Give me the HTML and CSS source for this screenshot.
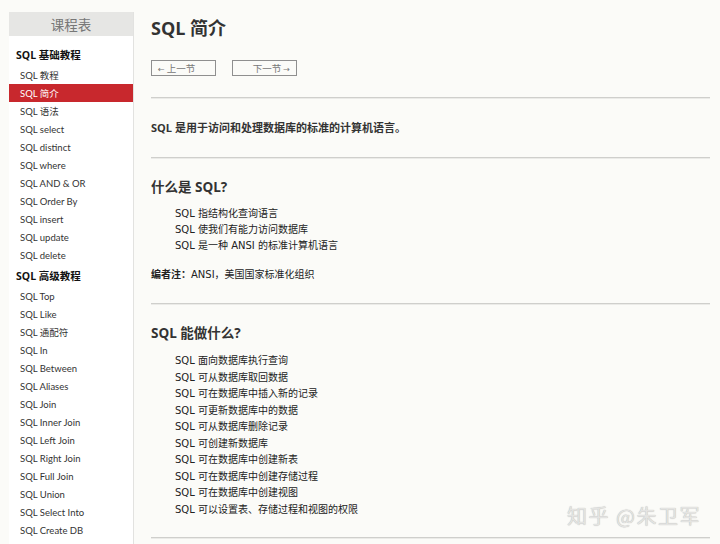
FILE: index.html
```html
<!DOCTYPE html>
<html lang="zh-CN">
<head>
<meta charset="utf-8">
<title>SQL 简介</title>
<link rel="stylesheet" href="styles.css">
</head>
<body>
<div class="page">
  <aside class="sidebar">
    <div class="side-head">课程表</div>
    <div class="side-body">
      <div class="cat">SQL 基础教程</div>
      <div class="item">SQL 教程</div>
      <div class="item active">SQL 简介</div>
      <div class="item">SQL 语法</div>
      <div class="item">SQL select</div>
      <div class="item">SQL distinct</div>
      <div class="item">SQL where</div>
      <div class="item">SQL AND &amp; OR</div>
      <div class="item">SQL Order By</div>
      <div class="item">SQL insert</div>
      <div class="item">SQL update</div>
      <div class="item">SQL delete</div>
      <div class="cat">SQL 高级教程</div>
      <div class="item">SQL Top</div>
      <div class="item">SQL Like</div>
      <div class="item">SQL 通配符</div>
      <div class="item">SQL In</div>
      <div class="item">SQL Between</div>
      <div class="item">SQL Aliases</div>
      <div class="item">SQL Join</div>
      <div class="item">SQL Inner Join</div>
      <div class="item">SQL Left Join</div>
      <div class="item">SQL Right Join</div>
      <div class="item">SQL Full Join</div>
      <div class="item">SQL Union</div>
      <div class="item">SQL Select Into</div>
      <div class="item">SQL Create DB</div>
    </div>
  </aside>
  <main class="main">
    <h1 class="title">SQL 简介</h1>
    <div class="nav">
      <span class="btn btn-prev"><span class="arr">←</span> 上一节</span>
      <span class="btn btn-next">下一节 <span class="arr">→</span></span>
    </div>
    <hr class="rule">
    <p class="intro">SQL 是用于访问和处理数据库的标准的计算机语言。</p>
    <hr class="rule">
    <h2 class="sub">什么是 SQL?</h2>
    <ul class="list">
      <li>SQL 指结构化查询语言</li>
      <li>SQL 使我们有能力访问数据库</li>
      <li>SQL 是一种 ANSI 的标准计算机语言</li>
    </ul>
    <p class="note"><b>编者注：</b>ANSI，美国国家标准化组织</p>
    <hr class="rule rule-2">
    <h2 class="sub">SQL 能做什么?</h2>
    <ul class="list list-long">
      <li>SQL 面向数据库执行查询</li>
      <li>SQL 可从数据库取回数据</li>
      <li>SQL 可在数据库中插入新的记录</li>
      <li>SQL 可更新数据库中的数据</li>
      <li>SQL 可从数据库删除记录</li>
      <li>SQL 可创建新数据库</li>
      <li>SQL 可在数据库中创建新表</li>
      <li>SQL 可在数据库中创建存储过程</li>
      <li>SQL 可在数据库中创建视图</li>
      <li>SQL 可以设置表、存储过程和视图的权限</li>
    </ul>
    <hr class="rule rule-3">
  </main>
</div>
<div class="watermark">知乎 @朱卫军</div>
</body>
</html>
```

FILE: styles.css
```css
html, body {
  margin: 0;
  padding: 0;
  background: #fbfbf8;
  height: 544px;
  overflow: hidden;
}
body {
  font-family: "Noto Sans", "Noto Sans CJK SC", sans-serif;
  color: #222;
}
.page {
  display: flex;
  align-items: flex-start;
  padding-left: 9px;
}
.sidebar {
  width: 124px;
  margin-top: 12px;
  background: #ffffff;
  border-right: 1px solid #e2e2e0;
  height: 532px;
  overflow: hidden;
  flex: none;
}
.side-head {
  height: 24px;
  line-height: 24px;
  background: #e6e6e4;
  color: #777;
  text-align: center;
  font-size: 13.5px;
  font-family: "Noto Sans CJK SC", sans-serif;
}
.side-body {
  padding-top: 7px;
}
.cat {
  height: 23px;
  line-height: 25px;
  padding-left: 7px;
  font-size: 10.5px;
  font-weight: bold;
  color: #111;
  font-family: "Open Sans", "Noto Sans CJK SC", sans-serif;
}
.item {
  height: 18px;
  line-height: 19px;
  padding-left: 11px;
  font-size: 9.5px;
  color: #333;
  font-family: "Lato", "Noto Sans CJK SC", sans-serif;
}
.item.active {
  background: #c8282d;
  color: #fff;
}
.main {
  width: 559px;
  margin-left: 17px;
  padding-top: 16px;
  flex: none;
}
.title {
  margin: 0;
  height: 24px;
  line-height: 24px;
  font-size: 18px;
  font-weight: bold;
  color: #333;
  font-family: "Open Sans", "Noto Sans CJK SC", sans-serif;
}
.nav {
  display: flex;
  gap: 16px;
  margin-top: 20px;
}
.btn {
  box-sizing: border-box;
  width: 65px;
  height: 16px;
  line-height: 14px;
  border: 1px solid #8f8f8f;
  font-size: 9.5px;
  color: #777;
  font-family: "Noto Sans CJK SC", sans-serif;
  padding: 0 6px;
}
.btn-next {
  text-align: right;
}
.arr {
  font-size: 8px;
  font-family: "DejaVu Sans", sans-serif;
}
.rule {
  margin: 21px 0 0 0;
  height: 0;
  border: 0;
  border-top: 1px solid #cfcfcc;
  border-bottom: 1px solid #ebebe8;
}
.intro {
  margin: 20px 0 0 0;
  line-height: 18px;
  font-size: 11px;
  font-weight: bold;
  color: #333;
  font-family: "Open Sans", "Noto Sans CJK SC", sans-serif;
}
.intro + .rule {
  margin-top: 20px;
}
.sub {
  margin: 18px 0 0 0;
  line-height: 20px;
  font-size: 13.5px;
  font-weight: bold;
  color: #333;
  font-family: "Open Sans", "Noto Sans CJK SC", sans-serif;
}
.list {
  list-style: none;
  margin: 9px 0 0 0;
  padding: 0 0 0 24px;
  font-size: 10px;
  line-height: 16px;
  color: #222;
  font-family: "DejaVu Sans", "Noto Sans CJK SC", sans-serif;
}
.list-long {
  margin-top: 10px;
  line-height: 16.5px;
}
.note {
  margin: 12px 0 0 0;
  line-height: 16px;
  font-size: 10px;
  color: #222;
  font-family: "DejaVu Sans", "Noto Sans CJK SC", sans-serif;
}
.note b {
  font-family: "Noto Sans CJK SC", sans-serif;
}
.rule-2 {
  margin-top: 20px;
}
.rule-3 {
  margin-top: 19px;
}
.watermark {
  position: absolute;
  left: 567px;
  top: 503px;
  font-size: 20px;
  line-height: 26px;
  color: #e4e4e2;
  text-shadow: 0 0 1px #a8a8a8;
  font-family: "Noto Sans CJK SC", sans-serif;
  letter-spacing: 1.5px;
}
```
